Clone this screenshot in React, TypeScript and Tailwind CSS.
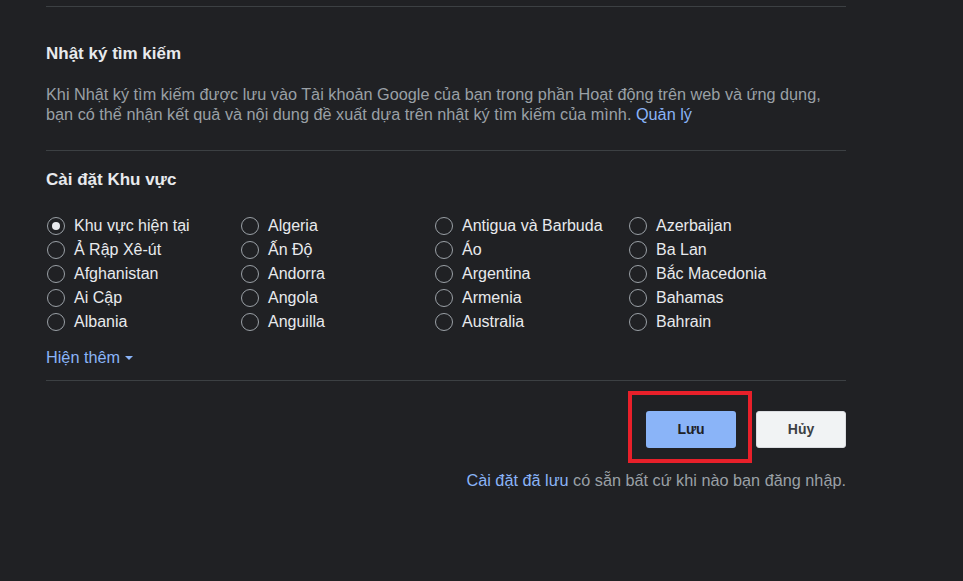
import React from "react";

const cols: string[][] = [
  ["Khu vực hiện tại", "Ả Rập Xê-út", "Afghanistan", "Ai Cập", "Albania"],
  ["Algeria", "Ấn Độ", "Andorra", "Angola", "Anguilla"],
  ["Antigua và Barbuda", "Áo", "Argentina", "Armenia", "Australia"],
  ["Azerbaijan", "Ba Lan", "Bắc Macedonia", "Bahamas", "Bahrain"],
];

function Radio({ label, checked }: { label: string; checked?: boolean }) {
  return (
    <div className="flex items-center h-[24px]">
      <span className="ml-[1px] w-[18px] h-[18px] rounded-full border border-[#9aa0a6] flex items-center justify-center">
        {checked && <span className="w-[8px] h-[8px] rounded-full bg-[#e8eaed]" />}
      </span>
      <span className="ml-[9px] text-[16px] leading-[20px] text-[#e8eaed]">{label}</span>
    </div>
  );
}

export default function App() {
  return (
    <div
      className="w-full h-[581px] bg-[#202124] overflow-hidden"
      style={{ fontFamily: '"Liberation Sans", Arial, sans-serif' }}
    >
      <div className="ml-[46px] w-[800px] pt-[6px]">
        <div className="border-t border-[#3c4043]" />
        <h2 className="mt-[37px] text-[17px] leading-[20px] font-bold text-[#e8eaed]">Nhật ký tìm kiếm</h2>
        <p className="mt-[20px] text-[16.25px] leading-[20px] text-[#9aa0a6]">
          Khi Nhật ký tìm kiếm được lưu vào Tài khoản Google của bạn trong phần Hoạt động trên web và ứng dụng,
          <br />
          bạn có thể nhận kết quả và nội dung đề xuất dựa trên nhật ký tìm kiếm của mình.{" "}
          <span className="text-[#8ab4f8]">Quản lý</span>
        </p>
        <div className="mt-[26px] border-t border-[#3c4043]" />
        <h2 className="mt-[19px] text-[17px] leading-[20px] font-bold text-[#e8eaed]">Cài đặt Khu vực</h2>
        <div className="mt-[24px] flex">
          {cols.map((col, ci) => (
            <div key={ci} className="w-[194px] flex flex-col">
              {col.map((l, i) => (
                <Radio key={l} label={l} checked={ci === 0 && i === 0} />
              ))}
            </div>
          ))}
        </div>
        <div className="mt-[13px] flex items-center text-[16.25px] leading-[20px] text-[#8ab4f8]">
          Hiện thêm
          <span className="ml-[5px] mt-[2px] w-0 h-0 border-l-[4px] border-r-[4px] border-t-[4px] border-l-transparent border-r-transparent border-t-[#8ab4f8]" />
        </div>
        <div className="mt-[13px] border-t border-[#3c4043]" />
        <div className="mt-[30px] flex justify-end gap-[20px]">
          <div className="relative">
            <button className="w-[90px] h-[37px] rounded-[3px] bg-[#8ab4f8] text-[14px] font-bold text-[#202124]">
              Lưu
            </button>
            <div className="absolute left-[-18px] top-[-20px] w-[124px] h-[72px] border-[4px] border-[#e8202a] pointer-events-none" />
          </div>
          <button className="w-[90px] h-[37px] rounded-[3px] bg-[#f1f3f4] border border-[#dadce0] text-[14px] font-bold text-[#3c4043]">
            Hủy
          </button>
        </div>
        <p className="mt-[22px] text-right text-[16.25px] leading-[20px] text-[#9aa0a6]">
          <span className="text-[#8ab4f8]">Cài đặt đã lưu</span> có sẵn bất cứ khi nào bạn đăng nhập.
        </p>
      </div>
    </div>
  );
}
